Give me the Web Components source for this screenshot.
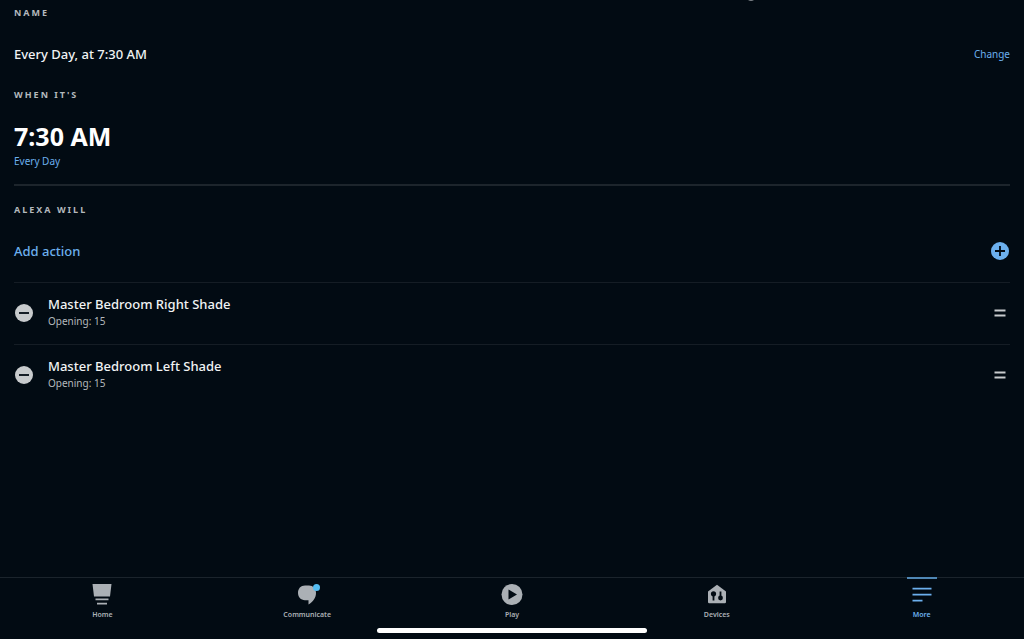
<!DOCTYPE html>
<html lang="en">
<head>
<meta charset="utf-8">
<meta name="viewport" content="width=device-width, initial-scale=1">
<title>Routine</title>
<style>
    body {
        margin: 0;
        background: #020b13;
        color: #f1f3f4;
        font-family: "Noto Sans", "Open Sans", sans-serif;
        --link: #6cb0ee;
        --muted: #b4b9bd;
        --line: #151d25;
    }
</style>
</head>
<body>
<routine-page>
    <routine-section heading="Name">
        <name-row name="Every Day, at 7:30 AM"></name-row>
    </routine-section>
    <routine-section heading="When it's">
        <time-block time="7:30 AM" repeat="Every Day"></time-block>
    </routine-section>
    <routine-section heading="Alexa will" divided>
        <add-row></add-row>
        <action-row name="Master Bedroom Right Shade" detail="Opening: 15"></action-row>
        <action-row name="Master Bedroom Left Shade" detail="Opening: 15"></action-row>
    </routine-section>

    <tab-bar slot="footer">
        <tab-item label="Home">
            <svg width="22" height="22" viewBox="0 0 22 22" fill="currentColor">
                <path d="M1.5 0H20.5L19 12.5H3zM4.500 14.5H17.500V16.2H4.500zM6 18.8H16V20.5H6z"/>
            </svg>
        </tab-item>
        <tab-item label="Communicate">
            <svg width="22" height="22" viewBox="0 0 22 22" fill="currentColor">
                <path d="M9 1.500H13C17 1.500 20 4.500 20 8.800C20 14 17 18 12.500 20.500V16.200H9C4.700 16.200 2 13 2 8.800S4.700 1.500 9 1.500z"/>
                <circle cx="20.500" cy="3.500" r="3.500" fill="#55bdf2"/>
            </svg>
        </tab-item>
        <tab-item label="Play">
            <svg width="22" height="22" viewBox="0 0 22 22" fill="currentColor">
                <circle cx="11" cy="10.500" r="10.500"/>
                <path d="M7.500 5.500L16 10.500L7.500 15.500z" fill="#020b13"/>
            </svg>
        </tab-item>
        <tab-item label="Devices">
            <svg width="22" height="22" viewBox="0 0 22 22" fill="currentColor">
                <path d="M11 .8L20 7.500V18Q20 19.200 18.800 19.200H3.200Q2 19.200 2 18V7.500z"/>
                <g fill="#020b13">
                    <circle cx="7.500" cy="9.800" r="2.600"/>
                    <path d="M6.600 11H8.400V16.500H6.600zM13.600 7.500H15.400V13H13.600z"/>
                    <circle cx="14.500" cy="14" r="2.400"/>
                </g>
            </svg>
        </tab-item>
        <tab-item label="More" active>
            <svg width="22" height="22" viewBox="0 0 22 22" fill="currentColor">
                <path d="M1.500 3.700H20.500V5.500H1.500zM1.500 9.700H20.500V11.500H1.500zM1.500 15.700H11.500V17.500H1.500z"/>
            </svg>
        </tab-item>
    </tab-bar>
</routine-page>

<script>
class RoutinePage extends HTMLElement {
    constructor() {
        super();
        this.attachShadow({ mode: "open" });
        this.shadowRoot.innerHTML = `
        <style>
            :host {
                display: flex;
                flex-direction: column;
                min-height: 100vh;
                position: relative;
            }

            main {
                flex: 1;
                padding: 3px 14px;
            }

            /* end of the header text, scrolled out of view */
            .scrolled {
                position: absolute;
                top: 0;
                left: 73%;
            }
        </style>
        <svg class="scrolled" width="8" height="2" viewBox="0 0 8 2" aria-hidden="true">
            <path d="M0 0Q3 2 6 0" fill="#7d8388"/>
        </svg>
        <main><slot></slot></main>
        <slot name="footer"></slot>
        `;
    }
}

class RoutineSection extends HTMLElement {
    constructor() {
        super();
        this.attachShadow({ mode: "open" });
        this.shadowRoot.innerHTML = `
        <style>
            :host {
                display: block;
            }

            :host([divided]) {
                border-top: 2px solid #1d252c;
                padding-top: 14px;
            }

            h2 {
                margin: 0;
                font-size: 9px;
                line-height: 20px;
                font-weight: 700;
                letter-spacing: 2px;
                text-transform: uppercase;
                color: var(--muted);
            }
        </style>
        <h2>${this.getAttribute("heading")}</h2>
        <slot></slot>
        `;
    }
}

class NameRow extends HTMLElement {
    constructor() {
        super();
        this.attachShadow({ mode: "open" });
        this.shadowRoot.innerHTML = `
        <style>
            :host {
                display: flex;
                align-items: center;
                justify-content: space-between;
                height: 62px;
                font-size: 13px;
                font-weight: 500;
            }

            a {
                color: var(--link);
                font-size: 10px;
                font-weight: 400;
                text-decoration: none;
            }
        </style>
        <span>${this.getAttribute("name")}</span>
        <a href="#name">Change</a>
        `;
    }
}

class TimeBlock extends HTMLElement {
    constructor() {
        super();
        this.attachShadow({ mode: "open" });
        this.shadowRoot.innerHTML = `
        <style>
            :host {
                display: block;
                padding: 15px 0 14px;
            }

            .time {
                font-size: 25px;
                line-height: 32px;
                font-weight: 700;
                color: #fff;
            }

            a {
                display: block;
                width: fit-content;
                font-size: 10px;
                line-height: 18px;
                color: var(--link);
                text-decoration: none;
            }
        </style>
        <div class="time">${this.getAttribute("time")}</div>
        <a href="#repeat">${this.getAttribute("repeat")}</a>
        `;
    }
}

class AddRow extends HTMLElement {
    constructor() {
        super();
        this.attachShadow({ mode: "open" });
        this.shadowRoot.innerHTML = `
        <style>
            :host {
                display: block;
            }

            button {
                display: flex;
                align-items: center;
                justify-content: space-between;
                width: 100%;
                height: 62px;
                padding: 0 1px 0 0;
                border: 0;
                background: none;
                color: var(--link);
                font: inherit;
                font-size: 13px;
                font-weight: 500;
            }
        </style>
        <button type="button">
            <span>Add action</span>
            <svg width="18" height="18" viewBox="0 0 18 18" aria-hidden="true">
                <circle cx="9" cy="9" r="9" fill="currentColor"/>
                <path d="M9 4V14M4 9H14" stroke="#020b13" stroke-width="1.800"/>
            </svg>
        </button>
        `;
    }
}

class ActionRow extends HTMLElement {
    constructor() {
        super();
        this.attachShadow({ mode: "open" });
        const name = this.getAttribute("name");
        this.shadowRoot.innerHTML = `
        <style>
            :host {
                display: flex;
                align-items: center;
                box-sizing: border-box;
                height: 62px;
                padding-bottom: 1px;
                border-top: 1px solid var(--line);
            }

            button {
                display: flex;
                padding: 0 1px;
                border: 0;
                background: none;
            }

            .text {
                flex: 1;
                padding: 0 14px 2px;
            }

            .name {
                font-size: 13px;
                line-height: 18px;
                font-weight: 500;
            }

            .detail {
                font-size: 10px;
                line-height: 16px;
                color: var(--muted);
            }
        </style>
        <button type="button" aria-label="Remove ${name}">
            <svg width="18" height="18" viewBox="0 0 18 18">
                <circle cx="9" cy="9" r="9" fill="#c8cbcd"/>
                <path d="M4 9H14" stroke="#020b13" stroke-width="1.800"/>
            </svg>
        </button>
        <div class="text">
            <div class="name">${name}</div>
            <div class="detail">${this.getAttribute("detail")}</div>
        </div>
        <button type="button" aria-label="Reorder ${name}">
            <svg width="18" height="18" viewBox="0 0 18 18">
                <path d="M3.500 6.500H14.500M3.500 11.500H14.500" stroke="#c8cbcd" stroke-width="1.800"/>
            </svg>
        </button>
        `;
    }
}

class TabBar extends HTMLElement {
    constructor() {
        super();
        this.attachShadow({ mode: "open" });
        this.shadowRoot.innerHTML = `
        <style>
            :host {
                display: block;
                border-top: 1px solid #1b242c;
                padding-bottom: 6px;
            }

            nav {
                display: grid;
                grid-template-columns: repeat(5, 1fr);
                height: 50px;
            }

            .indicator {
                width: 270px;
                height: 5px;
                margin: 0 auto;
                border-radius: 3px;
                background: #fff;
            }
        </style>
        <nav><slot></slot></nav>
        <div class="indicator"></div>
        `;
    }
}

class TabItem extends HTMLElement {
    constructor() {
        super();
        this.attachShadow({ mode: "open" });
        this.shadowRoot.innerHTML = `
        <style>
            :host {
                display: flex;
                justify-content: center;
                color: #abb0b5;
            }

            :host([active]) {
                color: var(--link);
            }

            a {
                position: relative;
                display: flex;
                flex-direction: column;
                align-items: center;
                padding-top: 6px;
                color: inherit;
                font-size: 7px;
                line-height: 17px;
                font-weight: 600;
                text-decoration: none;
            }

            :host([active]) a::before {
                content: "";
                position: absolute;
                top: -1px;
                left: 50%;
                width: 30px;
                height: 2px;
                margin-left: -15px;
                background: #4f87b5;
            }

            ::slotted(svg) {
                display: block;
                overflow: visible;
            }
        </style>
        <a href="#${this.getAttribute("label").toLowerCase()}"><slot></slot><span>${this.getAttribute("label")}</span></a>
        `;
    }
}

customElements.define("routine-page", RoutinePage);
customElements.define("routine-section", RoutineSection);
customElements.define("name-row", NameRow);
customElements.define("time-block", TimeBlock);
customElements.define("add-row", AddRow);
customElements.define("action-row", ActionRow);
customElements.define("tab-bar", TabBar);
customElements.define("tab-item", TabItem);
</script>
</body>
</html>
